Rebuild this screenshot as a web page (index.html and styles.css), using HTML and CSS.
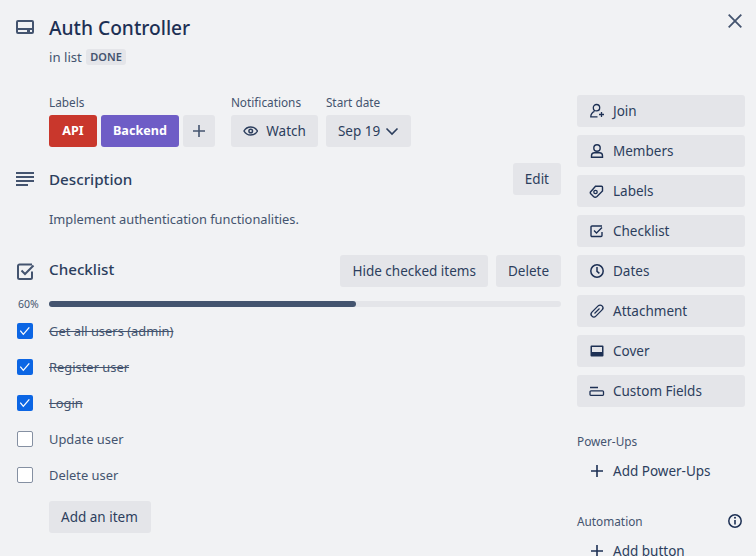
FILE: index.html
```html
<!DOCTYPE html>
<html>
	<head>
		<meta charset="utf-8">
		<title>Auth Controller</title>
		<link rel="stylesheet" href="styles.css">
	</head>
	<body>
		<div id="card">
			<button class="close" aria-label="Close">
				<svg width="14" height="14" viewBox="0 0 14 14"><path d="M.7.7l12.600 12.600M13.300.7L.7 13.300" fill="none" stroke="#44546f" stroke-width="1.800"/></svg>
			</button>
			<div id="main">
				<div class="section title-row">
					<svg class="section-icon" width="18" height="14" viewBox="0 0 18 14"><path fill-rule="evenodd" d="M2 0h14a2 2 0 0 1 2 2v10a2 2 0 0 1-2 2H2a2 2 0 0 1-2-2V2a2 2 0 0 1 2-2zM2 2v6h14V2zM2 10v2h9v-2zM14 10v2h2v-2z" fill="#44546f"/></svg>
					<div class="section-body">
						<h1>Auth Controller</h1>
						<p class="in-list">in list <span class="list-tag">DONE</span></p>
					</div>
				</div>

				<div class="meta">
					<div class="meta-group">
						<h3>Labels</h3>
						<div class="meta-row">
							<span class="label red">API</span>
							<span class="label purple">Backend</span>
							<button class="btn square">
								<svg width="16" height="16" viewBox="0 0 16 16"><path d="M8 2v12M2 8h12" fill="none" stroke="#44546f" stroke-width="1.600"/></svg>
							</button>
						</div>
					</div>
					<div class="meta-group">
						<h3>Notifications</h3>
						<button class="btn watch">
							<svg width="16" height="16" viewBox="0 0 16 16"><path d="M1 8c1.600-2.800 4-4.200 7-4.200s5.400 1.400 7 4.200c-1.600 2.800-4 4.200-7 4.200S2.600 10.800 1 8z" fill="none" stroke="#2c3e5d" stroke-width="1.500"/><circle cx="8" cy="8" r="1.900" fill="none" stroke="#2c3e5d" stroke-width="1.500"/></svg>
							Watch
						</button>
					</div>
					<div class="meta-group">
						<h3>Start date</h3>
						<button class="btn date">
							Sep 19
							<svg width="14" height="16" viewBox="0 0 14 16"><path d="M1.500 5.500L7 11l5.500-5.500" fill="none" stroke="#2c3e5d" stroke-width="1.600"/></svg>
						</button>
					</div>
				</div>

				<div class="section desc-head">
					<svg class="section-icon" width="18" height="14" viewBox="0 0 18 14"><path d="M0 1h18M0 5h18M0 9h18M0 13h12" fill="none" stroke="#44546f" stroke-width="2"/></svg>
					<div class="section-body head-row">
						<h2>Description</h2>
						<button class="btn">Edit</button>
					</div>
				</div>
				<p class="desc">Implement authentication functionalities.</p>

				<div class="section check-head">
					<svg class="section-icon check-icon" width="18" height="17" viewBox="0 0 18 17"><path d="M15 8.500v6a1.500 1.500 0 0 1-1.500 1.500H2.500A1.500 1.500 0 0 1 1 14.500V3a1.500 1.500 0 0 1 1.500-1.500h12.500M4.500 7.500l3.500 3.500L16.500 2.500" fill="none" stroke="#44546f" stroke-width="2"/></svg>
					<div class="section-body head-row">
						<h2>Checklist</h2>
						<div class="head-actions">
							<button class="btn">Hide checked items</button>
							<button class="btn">Delete</button>
						</div>
					</div>
				</div>

				<div class="progress">
					<span class="percent">60%</span>
					<div class="track"><div class="fill" style="width: 60%"></div></div>
				</div>

				<ul class="items">
					<li class="done"><span class="box"><svg width="16" height="16" viewBox="0 0 16 16"><path d="M3.300 7.700l3 3.600 6-7" fill="none" stroke="#fff" stroke-width="1.300"/></svg></span><span>Get all users (admin)</span></li>
					<li class="done"><span class="box"><svg width="16" height="16" viewBox="0 0 16 16"><path d="M3.300 7.700l3 3.600 6-7" fill="none" stroke="#fff" stroke-width="1.300"/></svg></span><span>Register user</span></li>
					<li class="done"><span class="box"><svg width="16" height="16" viewBox="0 0 16 16"><path d="M3.300 7.700l3 3.600 6-7" fill="none" stroke="#fff" stroke-width="1.300"/></svg></span><span>Login</span></li>
					<li><span class="box"></span><span>Update user</span></li>
					<li><span class="box"></span><span>Delete user</span></li>
				</ul>
				<button class="btn add-item">Add an item</button>
			</div>

			<div id="side">
				<button class="btn side-btn">
					<svg width="16" height="16" viewBox="0 0 16 16"><circle cx="7.500" cy="4.700" r="3.200" fill="none" stroke="#1d3054" stroke-width="1.300"/><path d="M8.500 13.800H1.800c0-2.800 1.700-4.500 3.700-5.400" fill="none" stroke="#1d3054" stroke-width="1.300"/><path d="M12.500 9v5M10 11.500h5" fill="none" stroke="#1d3054" stroke-width="1.300"/></svg>
					Join
				</button>
				<button class="btn side-btn">
					<svg width="16" height="16" viewBox="0 0 16 16"><circle cx="8" cy="5" r="3.200" fill="none" stroke="#1d3054" stroke-width="1.400"/><path d="M2.500 14.200v-1.400c0-1.800 1.300-3 3-3h5c1.700 0 3 1.200 3 3v1.400z" fill="none" stroke="#1d3054" stroke-width="1.400"/></svg>
					Members
				</button>
				<button class="btn side-btn">
					<svg width="16" height="16" viewBox="0 0 16 16"><path d="M1.500 9l5-5.800H12.500a1 1 0 0 1 1 1V8L8 13.500c-1.200 1-2.500 1-3.500 0L2 11c-.7-.7-.9-1.400-.5-2z" fill="none" stroke="#1d3054" stroke-width="1.400"/><circle cx="6.500" cy="9" r="1.700" fill="none" stroke="#1d3054" stroke-width="1.300"/></svg>
					Labels
				</button>
				<button class="btn side-btn">
					<svg width="16" height="16" viewBox="0 0 16 16"><path d="M13 9v3.500a1 1 0 0 1-1 1H3a1 1 0 0 1-1-1V4a1 1 0 0 1 1-1h10M5 7.500l2.500 2.500 5.500-5.500" fill="none" stroke="#1d3054" stroke-width="1.400"/></svg>
					Checklist
				</button>
				<button class="btn side-btn">
					<svg width="16" height="16" viewBox="0 0 16 16"><circle cx="8" cy="8" r="6.200" fill="none" stroke="#1d3054" stroke-width="1.500"/><path d="M8 4v4.300l2.400 2" fill="none" stroke="#1d3054" stroke-width="1.500"/></svg>
					Dates
				</button>
				<button class="btn side-btn">
					<svg width="16" height="16" viewBox="0 0 16 16"><rect x="5.200" y="0.800" width="5.600" height="14.400" rx="2.800" fill="none" stroke="#1d3054" stroke-width="1.300" transform="rotate(45 8 8)"/><path d="M5.500 10.500l5-5" fill="none" stroke="#1d3054" stroke-width="1.200"/></svg>
					Attachment
				</button>
				<button class="btn side-btn">
					<svg width="16" height="16" viewBox="0 0 16 16"><path fill-rule="evenodd" d="M2.500 2.500h11a1 1 0 0 1 1 1v9a1 1 0 0 1-1 1h-11a1 1 0 0 1-1-1v-9a1 1 0 0 1 1-1zM3 4v5h10V4z" fill="#1d3054"/></svg>
					Cover
				</button>
				<button class="btn side-btn">
					<svg width="16" height="16" viewBox="0 0 16 16"><path d="M1 4.500h8M2 7.800h11.500a1 1 0 0 1 1 1v2.700a.8.800 0 0 1-.8.800H1.800a.8.800 0 0 1-.8-.800V8.800a1 1 0 0 1 1-1z" fill="none" stroke="#1d3054" stroke-width="1.300"/></svg>
					Custom Fields
				</button>

				<h3 class="side-title powerups">Power-Ups</h3>
				<button class="btn side-btn plain">
					<svg width="16" height="16" viewBox="0 0 16 16"><path d="M8 2v12M2 8h12" fill="none" stroke="#1d3054" stroke-width="1.600"/></svg>
					Add Power-Ups
				</button>

				<div class="side-title automation">
					<h3>Automation</h3>
					<svg width="16" height="16" viewBox="0 0 16 16"><circle cx="8" cy="8" r="6.200" fill="none" stroke="#1d3054" stroke-width="1.500"/><path d="M8 7v4.500" stroke="#1d3054" stroke-width="1.600"/><circle cx="8" cy="4.800" r="1" fill="#1d3054"/></svg>
				</div>
				<button class="btn side-btn plain">
					<svg width="16" height="16" viewBox="0 0 16 16"><path d="M8 2v12M2 8h12" fill="none" stroke="#1d3054" stroke-width="1.600"/></svg>
					Add button
				</button>
			</div>
		</div>
	</body>
</html>
```

FILE: styles.css
```css
html, body {
	margin: 0;
	padding: 0;
	height: 100%;
	overflow: hidden;
	}

body {
	background-color: #f1f2f4;
	color: #2c3e5d;
	font: 13px/20px "Noto Sans", sans-serif;
	}

h1, h2, h3, p, ul {
	margin: 0;
	padding: 0;
	}

#card {
	position: relative;
	display: flex;
	gap: 16px;
	height: 556px;
	padding: 0 11px 0 16px;
	box-sizing: border-box;
	overflow: hidden;
	}

#main {
	width: 545px;
	flex: none;
	}

#side {
	width: 168px;
	flex: none;
	display: flex;
	flex-direction: column;
	gap: 8px;
	padding-top: 95px;
	}

.close {
	position: absolute;
	top: 14px;
	right: 14px;
	width: 14px;
	height: 14px;
	padding: 0;
	border: 0;
	background: none;
	}

.close svg {
	display: block;
	}

.btn {
	display: inline-flex;
	align-items: center;
	gap: 8px;
	height: 32px;
	padding: 0 12px;
	border: 0;
	border-radius: 3px;
	background-color: #e4e5e9;
	color: #2c3e5d;
	font: inherit;
	font-size: 13.500px;
	white-space: nowrap;
	}

.square {
	width: 32px;
	padding: 0;
	justify-content: center;
	}

.watch {
	width: 87px;
	}

.date {
	gap: 5px;
	}

.section {
	display: flex;
	}

.section-icon {
	flex: none;
	margin-right: 15px;
	}

.check-icon {
	margin-left: 1px;
	margin-right: 14px;
	}

.section-body {
	flex: 1;
	}

.head-row {
	display: flex;
	align-items: center;
	justify-content: space-between;
	}

.head-actions {
	display: flex;
	gap: 8px;
	}

.title-row {
	padding-top: 16px;
	}

.title-row .section-icon {
	margin-top: 4px;
	}

h1 {
	font-size: 19.200px;
	line-height: 24px;
	font-weight: 500;
	color: #1d3054;
	}

h2 {
	font-size: 15.200px;
	line-height: 20px;
	font-weight: 500;
	color: #2c3e5d;
	}

h3 {
	font-size: 11.800px;
	line-height: 16px;
	font-weight: 400;
	color: #44546f;
	}

.in-list {
	margin-top: 7px;
	font-size: 13.200px;
	color: #44546f;
	}

.list-tag {
	display: inline-block;
	margin-left: 1px;
	padding: 0 4px;
	border-radius: 3px;
	background-color: #e4e5e9;
	font-size: 11px;
	line-height: 16px;
	font-weight: 600;
	vertical-align: 1px;
	}

.meta {
	display: flex;
	gap: 8px;
	margin-top: 27px;
	padding-left: 33px;
	}

.meta-group h3 {
	margin-bottom: 5px;
	}

.meta-group:first-child {
	margin-right: 8px;
	}

.meta-row {
	display: flex;
	gap: 4px;
	}

.label {
	display: block;
	min-width: 48px;
	height: 32px;
	padding: 0 12px;
	border-radius: 3px;
	box-sizing: border-box;
	color: #fff;
	font-size: 12.600px;
	font-weight: 700;
	line-height: 32px;
	text-align: center;
	}

.red {
	background-color: #c9372c;
	}

.purple {
	background-color: #6e5dc6;
	}

.desc-head {
	align-items: center;
	margin-top: 16px;
	}

.desc {
	margin-top: 14px;
	padding-left: 33px;
	font-size: 12.850px;
	color: #44546f;
	}

.check-head {
	align-items: center;
	margin-top: 26px;
	}

.check-head h2 {
	margin-bottom: 4px;
	}

.progress {
	display: flex;
	align-items: center;
	margin-top: 9px;
	height: 16px;
	}

.percent {
	width: 33px;
	padding-left: 2px;
	box-sizing: border-box;
	font-size: 10.500px;
	color: #44546f;
	}

.track {
	flex: 1;
	height: 6px;
	border-radius: 3px;
	background-color: #e4e5e9;
	}

.fill {
	height: 6px;
	border-radius: 3px;
	background-color: #44546f;
	}

.items {
	list-style: none;
	margin-top: 1px;
	font-size: 12.900px;
	}

.items li {
	display: flex;
	align-items: center;
	height: 36px;
	color: #44546f;
	}

.items .done span:last-child {
	text-decoration: line-through;
	}

.box {
	flex: none;
	width: 16px;
	height: 16px;
	margin: 0 16px 0 1px;
	border: 1px solid #8590a2;
	border-radius: 2px;
	box-sizing: border-box;
	background-color: #fff;
	}

.done .box {
	border: 0;
	background-color: #0c66e4;
	}

.box svg {
	display: block;
	}

.add-item {
	width: 102px;
	margin: 8px 0 0 33px;
	}

.side-btn {
	flex: none;
	}

.plain {
	margin-top: -2px;
	background: none;
	}

.side-title {
	color: #44546f;
	}

.powerups {
	margin-top: 18px;
	}

.automation {
	display: flex;
	align-items: center;
	justify-content: space-between;
	margin-top: 18px;
	}

.automation svg {
	margin-right: 2px;
	}
```
